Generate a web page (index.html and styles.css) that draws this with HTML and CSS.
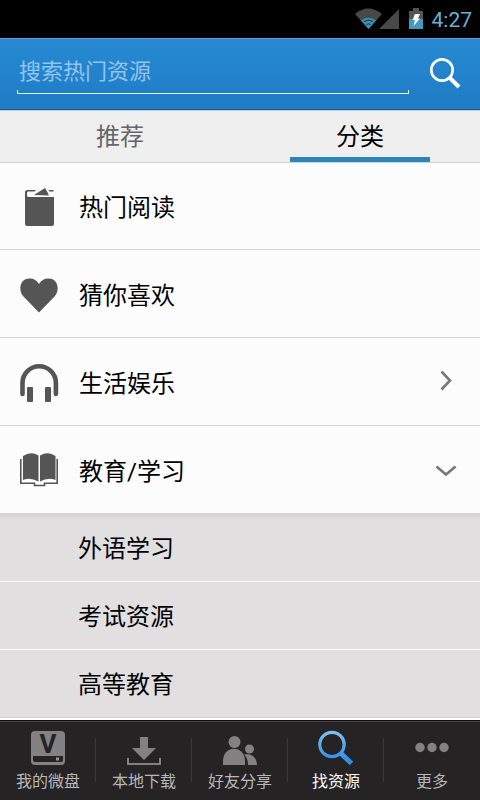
FILE: index.html
```html
<!DOCTYPE html>
<html lang="zh-CN">
<head>
<meta charset="utf-8">
<meta name="viewport" content="width=device-width, initial-scale=1">
<title>找资源</title>
<link rel="stylesheet" href="styles.css">
</head>
<body>
<div class="app">
  <div class="status">
    <svg width="44" height="22" viewBox="0 0 44 22" aria-hidden="true">
      <path d="M0 6Q13 -5 27 6L13.500 21Z" fill="#484848"/>
      <path d="M6 12.500Q13.500 7 21 12.500L13.500 21Z" fill="#3a8fb5"/>
      <path d="M9 13.500Q13.500 10.500 18 13.500M11.500 16.500Q13.500 15 15.500 16.500" fill="none" stroke="#12303e"/>
      <path d="M44 1V21H24Z" fill="#484848"/>
    </svg>
    <svg class="battery" width="14" height="22" viewBox="0 0 14 22" aria-hidden="true">
      <path d="M4 0H10V3H14V11H0V3H4Z" fill="#555"/>
      <path d="M0 11H14V21H0Z" fill="#4499bd"/>
      <path d="M6 6H11L9 10.500H11L4.500 18L6 12H3.500Z" fill="#fff"/>
    </svg>
    <span class="clock">4:27</span>
  </div>

  <form class="search">
    <input class="search-box" type="text" placeholder="搜索热门资源" aria-label="搜索热门资源">
    <button class="search-button" type="button" aria-label="搜索">
      <svg width="32" height="32" viewBox="0 0 32 32" aria-hidden="true">
        <circle cx="13" cy="13" r="10.700" fill="none" stroke="#fff" stroke-width="2.700"/>
        <path d="M20 20L30 30" stroke="#fff" stroke-width="4"/>
      </svg>
    </button>
  </form>

  <div class="tabs" role="tablist">
    <button class="tab" type="button" role="tab" aria-selected="false">推荐</button>
    <button class="tab active" type="button" role="tab" aria-selected="true">分类</button>
  </div>

  <main class="list">
    <button class="row" type="button">
      <svg class="row-icon" width="40" height="40" viewBox="0 -2 40 40" fill="#555" aria-hidden="true">
        <path d="M7.500 0H16L14.500 1.500H8Q7 1.500 7 3V5.500Q7 7 9 7H34V34Q34 36 32 36H7Q5 36 5 34V2.500Q5 0 7.500 0ZM14 5L25 -2L28.500 4V5.500ZM28.500 0H33.500V1.500H29.500Z" transform="translate(0 2)"/>
      </svg>
      <span>热门阅读</span>
    </button>
    <button class="row" type="button">
      <svg class="row-icon" width="40" height="40" viewBox="0 0 40 40" fill="#555" aria-hidden="true">
        <path d="M19 38.500L3.500 22.500C-2 17 -.5 4.500 9.500 4.500C14 4.500 17 6.500 19 10C21 6.500 24 4.500 28.500 4.500C38.500 4.500 40 17 34.500 22.500Z"/>
      </svg>
      <span>猜你喜欢</span>
    </button>
    <button class="row" type="button">
      <svg class="row-icon" width="40" height="40" viewBox="0 -1 40 40" fill="#555" aria-hidden="true">
        <path d="M2.500 31V20A16.700 16.700 0 0 1 35.900 20V31" fill="none" stroke="#555" stroke-width="4.600" stroke-linecap="round"/>
        <rect x="7" y="24" width="6" height="15" rx="1"/>
        <rect x="25" y="24" width="6" height="15" rx="1"/>
      </svg>
      <span>生活娱乐</span>
      <svg class="chevron" width="22" height="22" viewBox="0 0 22 22" aria-hidden="true"><path d="M6.500 .5L15 9.500L6.500 18.500" fill="none" stroke="#777" stroke-width="2.600"/></svg>
    </button>
    <button class="row" type="button" aria-expanded="true">
      <svg class="row-icon" width="40" height="40" viewBox="0 0 40 40" fill="#555" aria-hidden="true">
        <path d="M3 6Q11 1 18.500 5.500V31.500Q10 27 3 30ZM20 5.500Q28 1 35.500 6V30Q28 27 20 31.500Z"/>
        <path d="M.8 9V33.300H14.500V35.500H24.500V33.300H37.200V9" fill="none" stroke="#555" stroke-width="1.600"/>
      </svg>
      <span>教育/学习</span>
      <svg class="chevron" width="22" height="22" viewBox="0 0 22 22" aria-hidden="true"><path d="M1.500 7.500L11 15.500L20.500 7.500" fill="none" stroke="#777" stroke-width="2.600"/></svg>
    </button>
    <div class="sublist">
      <button class="subrow" type="button">外语学习</button>
      <button class="subrow" type="button">考试资源</button>
      <button class="subrow" type="button">高等教育</button>
    </div>
  </main>

  <nav class="bottom">
    <a class="item" href="#disk">
      <svg width="36" height="36" viewBox="0 0 36 36" aria-hidden="true">
        <rect x="1" y="1" width="34" height="34" rx="4" fill="#828282"/>
        <path d="M3 26H33V30Q33 32 31 32H5Q3 32 3 30Z" fill="#252324"/>
        <rect x="26" y="27.500" width="3" height="3" fill="#999"/>
        <text class="disk-letter" x="18" y="23" text-anchor="middle">V</text>
      </svg>
      <span>我的微盘</span>
    </a>
    <a class="item" href="#download">
      <svg width="36" height="36" viewBox="0 0 36 36" fill="#828282" aria-hidden="true">
        <path d="M14 7H22V18H30L18 30L6 18H14Z"/>
        <path d="M2 28V34H34V28" fill="none" stroke="#828282" stroke-width="2"/>
      </svg>
      <span>本地下载</span>
    </a>
    <a class="item" href="#share">
      <svg width="36" height="36" viewBox="0 0 36 36" fill="#828282" aria-hidden="true">
        <circle cx="12.500" cy="12" r="6"/>
        <path d="M1 35V31C1 14.500 23 14.500 23 31V35Z"/>
        <circle cx="27.500" cy="19" r="4.500"/>
        <path d="M22 24.500C31 22.500 35 29 35 35H26Q26 28 22 24.500Z"/>
      </svg>
      <span>好友分享</span>
    </a>
    <a class="item current" href="#find">
      <svg width="36" height="36" viewBox="0 0 36 36" aria-hidden="true">
        <defs><linearGradient id="blue" x1="0" y1="0" x2="0" y2="36" gradientUnits="userSpaceOnUse"><stop offset="0" stop-color="#82c2f3"/><stop offset="1" stop-color="#2385e8"/></linearGradient></defs>
        <circle cx="14" cy="14.500" r="12.200" fill="none" stroke="url(#blue)" stroke-width="3.200"/>
        <path d="M22.500 23L33.500 33.500" stroke="url(#blue)" stroke-width="5"/>
      </svg>
      <span>找资源</span>
    </a>
    <a class="item" href="#more">
      <svg width="36" height="36" viewBox="0 0 36 36" fill="#828282" aria-hidden="true">
        <circle cx="6" cy="17.500" r="4.700"/><circle cx="18" cy="17.500" r="4.700"/><circle cx="30" cy="17.500" r="4.700"/>
      </svg>
      <span>更多</span>
    </a>
  </nav>
</div>
</body>
</html>
```
FILE: styles.css
```css
* {
  box-sizing: border-box;
}

body {
  margin: 0;
  background: #fcfcfc;
  color: #000;
  font-family: Roboto, "Noto Sans CJK SC", sans-serif;
  font-size: 24px;
}

button,
input {
  margin: 0;
  padding: 0;
  border: 0;
  border-radius: 0;
  background: none;
  color: inherit;
  font: inherit;
}

svg {
  display: block;
  flex: none;
}

.app {
  display: flex;
  flex-direction: column;
  min-height: 100vh;
}

.status {
  display: flex;
  align-items: center;
  justify-content: flex-end;
  height: 38px;
  padding-right: 8px;
  background: #000;
}

.battery {
  margin: 0 9px 0 10px;
}

.clock {
  padding-top: 2px;
  color: #68b2d1;
  font-size: 21px;
  line-height: 36px;
}

.search {
  display: flex;
  align-items: center;
  height: 72px;
  padding: 0 19px 3px 17px;
  border-top: 1px solid #5aa5dc;
  border-bottom: 1px solid #1c5790;
  background: linear-gradient(#268ad3, #1f7bc4);
}

.search-box {
  flex: 1;
  min-width: 0;
  height: 42px;
  padding: 0 2px 2px;
  background:
    linear-gradient(#e4f3fc, #e4f3fc) 0 100% / 1px 4px no-repeat,
    linear-gradient(#e4f3fc, #e4f3fc) 100% 100% / 1px 4px no-repeat,
    linear-gradient(#e4f3fc, #e4f3fc) 0 100% / 100% 1px no-repeat;
  color: #fff;
  font-size: 22px;
  outline: none;
}

.search-box::placeholder {
  color: #92c5ee;
  opacity: 1;
}

.search-button {
  margin-left: 20px;
}

.tabs {
  display: flex;
  height: 53px;
  border-top: 1px solid #b5d2e8;
  border-bottom: 1px solid #d2d2d2;
  background: #efefef;
}

.tab {
  display: flex;
  flex: 1;
  align-items: center;
  justify-content: center;
  padding-bottom: 4px;
  color: #666;
}

.tab.active {
  background: linear-gradient(#2a86b8, #2a86b8) 50% 100% / 140px 5px no-repeat;
  color: #000;
}

.list {
  flex: 1;
}

.row {
  display: flex;
  align-items: center;
  width: 100%;
  height: 88px;
  padding: 0 23px 0 20px;
  border-bottom: 1px solid #d5d5d5;
  text-align: left;
}

.row:first-child {
  height: 87px;
}

.row span {
  padding-bottom: 1px;
}

.row-icon {
  margin-right: 19px;
}

.chevron {
  margin-left: auto;
}

.sublist {
  border-bottom: 2px solid #fff;
  background: linear-gradient(#d2d0d1, #e1dfe0 5px);
}

.subrow {
  display: block;
  width: 100%;
  height: 68px;
  padding: 0 0 3px 78px;
  border-bottom: 1px solid #fafafa;
  text-align: left;
}

.subrow:last-child {
  border-bottom-color: #d0d0d0;
}

.bottom {
  display: flex;
  height: 80px;
  border-top: 1px solid #111;
  background: #252324;
  box-shadow: inset 0 1px #444;
}

.item {
  display: flex;
  flex: 1;
  flex-direction: column;
  align-items: center;
  padding-top: 9px;
  background: linear-gradient(#3b393a, #3b393a) 100% 17px / 1px 44px no-repeat;
  color: #b8b8b8;
  font-size: 16px;
  line-height: 24px;
  text-decoration: none;
}

.item:last-child {
  background: none;
}

.item span {
  margin-top: 4px;
}

.item.current {
  color: #fff;
}

.disk-letter {
  fill: #252324;
  font: bold 26px Roboto, sans-serif;
}
```
